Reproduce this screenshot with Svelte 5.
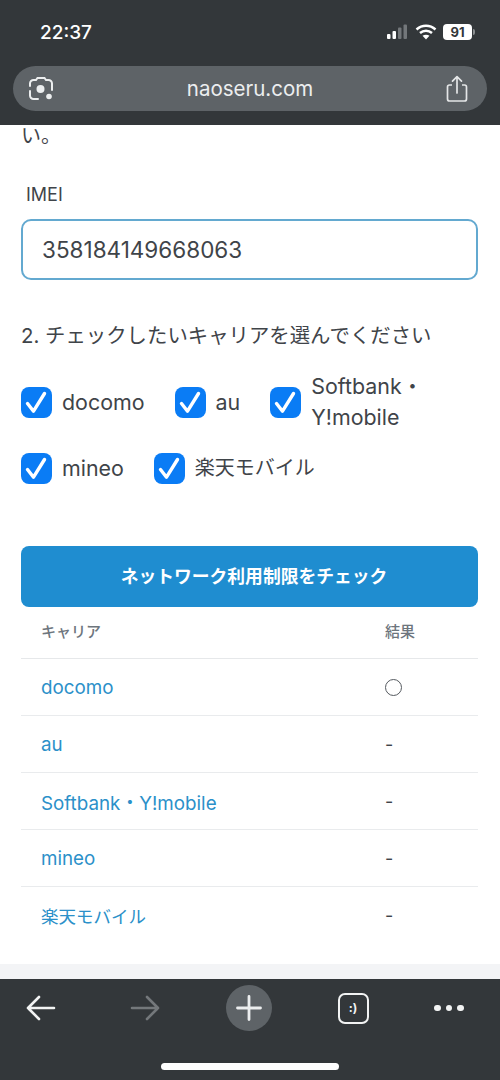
<script>
	const carriers = [
		{ name: 'docomo', result: '〇' },
		{ name: 'au', result: '-' },
		{ name: 'Softbank・Y!mobile', result: '-' },
		{ name: 'mineo', result: '-' },
		{ name: '楽天モバイル', result: '-', jp: true }
	];
	const firstRow = [{ label: 'docomo' }, { label: 'au' }, { label: 'Softbank・\nY!mobile' }];
	const secondRow = [{ label: 'mineo' }, { label: '楽天モバイル', jp: true }];
</script>

{#snippet check(c)}
	<label class="check">
		<span class="box">
			<svg viewBox="0 0 31 31" width="31" height="31" aria-hidden="true">
				<path d="M6.500 16.500l6 7.700L23.500 6.500" fill="none" stroke="#fff" stroke-width="3.400" stroke-linecap="round" stroke-linejoin="round" />
			</svg>
		</span>
		<span class="check-label" class:jp={c.jp}>{c.label}</span>
	</label>
{/snippet}

<div class="phone">
	<header class="top">
		<div class="status">
			<span class="time">22:37</span>
			<div class="status-icons">
				<svg width="22" height="16" viewBox="0 0 22 16" aria-hidden="true">
					<rect x="0" y="10" width="3.500" height="5" rx="1" fill="#fff" />
					<rect x="5.500" y="7" width="3.500" height="8" rx="1" fill="#fff" />
					<rect x="11" y="3.500" width="3.500" height="11.500" rx="1" fill="#73777a" />
					<rect x="16.500" y="0.500" width="3.500" height="14.500" rx="1" fill="#73777a" />
				</svg>
				<svg width="22" height="16" viewBox="0 0 22 16" aria-hidden="true">
					<path d="M1.500 5.500C7 .6 15 .6 20.500 5.500" fill="none" stroke="#fff" stroke-width="2.500" />
					<path d="M5 9c3.500-3 8.500-3 12 0" fill="none" stroke="#fff" stroke-width="2.500" />
					<path d="M11 15.500l-3.500-3.700c2-1.500 5-1.500 7 0z" fill="#fff" />
				</svg>
				<div class="battery">91</div>
				<span class="nub"></span>
			</div>
		</div>
		<div class="url">
			<svg width="28" height="28" viewBox="0 0 28 28" aria-hidden="true">
				<path d="M3 11V8.500A3.500 3.500 0 0 1 6.500 5H9l1.500-2h7L19 5h2.500A3.500 3.500 0 0 1 25 8.500V11M3 16v4.500A3.500 3.500 0 0 0 6.500 24H11" fill="none" stroke="#eceeef" stroke-width="2" stroke-linecap="round" />
				<path d="M25 11v4" fill="none" stroke="#eceeef" stroke-width="2" stroke-linecap="round" />
				<circle cx="13.500" cy="14" r="4" fill="#eceeef" />
				<circle cx="22" cy="21.500" r="2.800" fill="#eceeef" />
			</svg>
			<span class="host">naoseru.com</span>
			<svg width="24" height="28" viewBox="0 0 24 28" aria-hidden="true">
				<path d="M7 10H4.500A2 2 0 0 0 2.500 12v12a2 2 0 0 0 2 2h15a2 2 0 0 0 2-2V12a2 2 0 0 0-2-2H17" fill="none" stroke="#e4e6e7" stroke-width="1.700" />
				<path d="M12 18V2M7.500 6.200L12 1.700l4.500 4.500" fill="none" stroke="#e4e6e7" stroke-width="1.700" stroke-linecap="round" stroke-linejoin="round" />
			</svg>
		</div>
	</header>

	<main class="page">
		<p class="clipped">い。</p>
		<div class="imei-label">IMEI</div>
		<input class="imei" value="358184149668063" readonly />
		<h2 class="step">2. チェックしたいキャリアを選んでください</h2>
		<div class="checks first">
			{#each firstRow as c}
				{@render check(c)}
			{/each}
		</div>
		<div class="checks second">
			{#each secondRow as c}
				{@render check(c)}
			{/each}
		</div>
		<button class="submit">ネットワーク利用制限をチェック</button>
		<table>
			<thead>
				<tr><th>キャリア</th><th class="res">結果</th></tr>
			</thead>
			<tbody>
				{#each carriers as c}
					<tr>
						<td><span class="link" class:jp={c.jp}>{c.name}</span></td>
						<td class="res">
							{#if c.result === '〇'}<span class="maru"></span>{:else}{c.result}{/if}
						</td>
					</tr>
				{/each}
			</tbody>
		</table>
		<div class="spacer"></div>
		<div class="band"></div>
	</main>

	<footer class="bottom">
		<div class="tools">
			<div class="slot">
				<svg width="32" height="28" viewBox="0 0 32 28" aria-hidden="true">
					<path d="M29 14H3M14 3L3 14l11 11" fill="none" stroke="#f2f3f3" stroke-width="2.600" stroke-linecap="round" stroke-linejoin="round" />
				</svg>
			</div>
			<div class="slot">
				<svg width="32" height="28" viewBox="0 0 32 28" aria-hidden="true">
					<path d="M3 14h26M18 3l11 11-11 11" fill="none" stroke="#74787b" stroke-width="2.600" stroke-linecap="round" stroke-linejoin="round" />
				</svg>
			</div>
			<div class="slot plus">
				<svg width="26" height="26" viewBox="0 0 26 26" aria-hidden="true">
					<path d="M13 1.500v23M1.500 13h23" stroke="#eceeef" stroke-width="2.800" stroke-linecap="round" />
				</svg>
			</div>
			<div class="slot"><div class="tabs">:)</div></div>
			<div class="slot more"><div class="dots"><span></span><span></span><span></span></div></div>
		</div>
		<div class="home"></div>
	</footer>
</div>

<style>
	:global(body) {
		margin: 0;
		background: #fff;
	}

	.phone {
		width: 500px;
		height: 1080px;
		display: flex;
		flex-direction: column;
		overflow: hidden;
		font-family: Inter, 'Noto Sans CJK JP', sans-serif;
		color: #3f4449;
	}

	.top {
		flex: 0 0 125px;
		box-sizing: border-box;
		background: #33373a;
		padding: 0 13px;
		color: #fff;
	}

	.status {
		height: 66px;
		display: flex;
		align-items: center;
		justify-content: space-between;
		padding: 0 12px 2px 27px;
		box-sizing: border-box;
	}

	.time {
		font-size: 19px;
		font-weight: 500;
	}

	.status-icons {
		display: flex;
		align-items: center;
		gap: 6px;
	}

	.battery {
		width: 29px;
		height: 16px;
		background: #fff;
		border-radius: 4px;
		color: #33373a;
		font-size: 13px;
		font-weight: 700;
		line-height: 16px;
		text-align: center;
	}

	.nub {
		width: 2px;
		height: 6px;
		margin-left: -5px;
		background: #8b8e90;
		border-radius: 0 2px 2px 0;
	}

	.url {
		height: 45px;
		background: #5e6367;
		border-radius: 23px;
		display: flex;
		align-items: center;
		justify-content: space-between;
		padding: 0 18px 0 14px;
	}

	.host {
		font-size: 20.500px;
		color: #eceeef;
	}

	.page {
		flex: 1;
		min-height: 0;
		display: flex;
		flex-direction: column;
		padding: 0 21px;
		overflow: hidden;
		background: #fff;
	}

	.clipped {
		margin: -2px 0 0 0;
		height: 26px;
		font-size: 20px;
		line-height: 26px;
	}

	.imei-label {
		margin: 33px 0 0 5px;
		height: 26px;
		font-size: 18px;
		line-height: 26px;
	}

	.imei {
		box-sizing: border-box;
		width: 457px;
		height: 61px;
		margin-top: 11px;
		padding: 0 19px;
		border: 2px solid #63a9d0;
		border-radius: 10px;
		outline: none;
		background: #fff;
		font-family: inherit;
		font-size: 22.500px;
		color: #3f4449;
	}

	.step {
		margin: 41px 0 0;
		height: 30px;
		font-size: 20.400px;
		font-weight: 400;
		line-height: 30px;
		white-space: nowrap;
	}

	.checks {
		display: flex;
		align-items: center;
	}

	.first {
		height: 62px;
		margin-top: 20px;
		gap: 30px;
	}

	.second {
		height: 32px;
		margin-top: 19px;
		gap: 30px;
	}

	.check {
		display: flex;
		align-items: center;
		gap: 10px;
	}

	.box {
		flex: none;
		width: 31px;
		height: 31px;
		background: #0a7cf5;
		border-radius: 8px;
		display: flex;
		align-items: center;
		justify-content: center;
	}

	.check-label {
		font-size: 21.400px;
		line-height: 31px;
		white-space: pre-line;
	}

	.check-label.jp {
		font-size: 20px;
	}

	.submit {
		box-sizing: border-box;
		width: 457px;
		height: 61px;
		margin-top: 62px;
		padding: 0 0 3px 9px;
		flex: none;
		background: #1f8dd0;
		border: none;
		border-radius: 8px;
		color: #fff;
		font-family: inherit;
		font-size: 17.800px;
		font-weight: 700;
	}

	table {
		width: 457px;
		border-collapse: collapse;
		font-size: 18px;
	}

	th {
		height: 51px;
		padding: 0 20px 3px;
		box-sizing: border-box;
		text-align: left;
		font-size: 15px;
		font-weight: 500;
		color: #6d757d;
		border-bottom: 1px solid #e6e8ea;
	}

	td {
		height: 57px;
		box-sizing: border-box;
		padding: 2px 20px 0;
		border-bottom: 1px solid #e9ebed;
	}

	tbody tr:last-child td {
		border-bottom: none;
	}

	th.res,
	td.res {
		width: 93px;
		padding-left: 0;
		padding-right: 0;
	}

	.link {
		color: #2b90c9;
		font-size: 18.800px;
	}

	.link.jp {
		font-size: 17.500px;
	}

	.maru {
		display: block;
		box-sizing: border-box;
		width: 17px;
		height: 17px;
		border: 1.300px solid #555a5f;
		border-radius: 50%;
	}

	.spacer {
		flex: 1;
	}

	.band {
		flex: 0 0 15px;
		margin: 0 -21px;
		background: #f3f4f6;
	}

	.bottom {
		flex: 0 0 101px;
		box-sizing: border-box;
		background: #33373a;
		display: flex;
		flex-direction: column;
		align-items: center;
	}

	.tools {
		width: 100%;
		height: 58px;
		box-sizing: border-box;
		padding-left: 18px;
		display: flex;
		align-items: center;
		gap: 58px;
	}

	.slot {
		flex: none;
		width: 46px;
		height: 46px;
		display: flex;
		align-items: center;
		justify-content: center;
	}

	.plus {
		border-radius: 50%;
		background: #5e6367;
	}

	.more {
		margin-left: -8px;
	}

	.tabs {
		box-sizing: border-box;
		width: 31px;
		height: 31px;
		border: 2.200px solid #f2f3f3;
		border-radius: 7px;
		color: #f2f3f3;
		font-size: 12px;
		font-weight: 700;
		line-height: 26px;
		text-align: center;
	}

	.dots {
		display: flex;
		gap: 5px;
	}

	.dots span {
		width: 6.500px;
		height: 6.500px;
		border-radius: 50%;
		background: #f2f3f3;
	}

	.home {
		width: 178px;
		height: 7px;
		margin-top: 26px;
		background: #fff;
		border-radius: 4px;
	}
</style>
